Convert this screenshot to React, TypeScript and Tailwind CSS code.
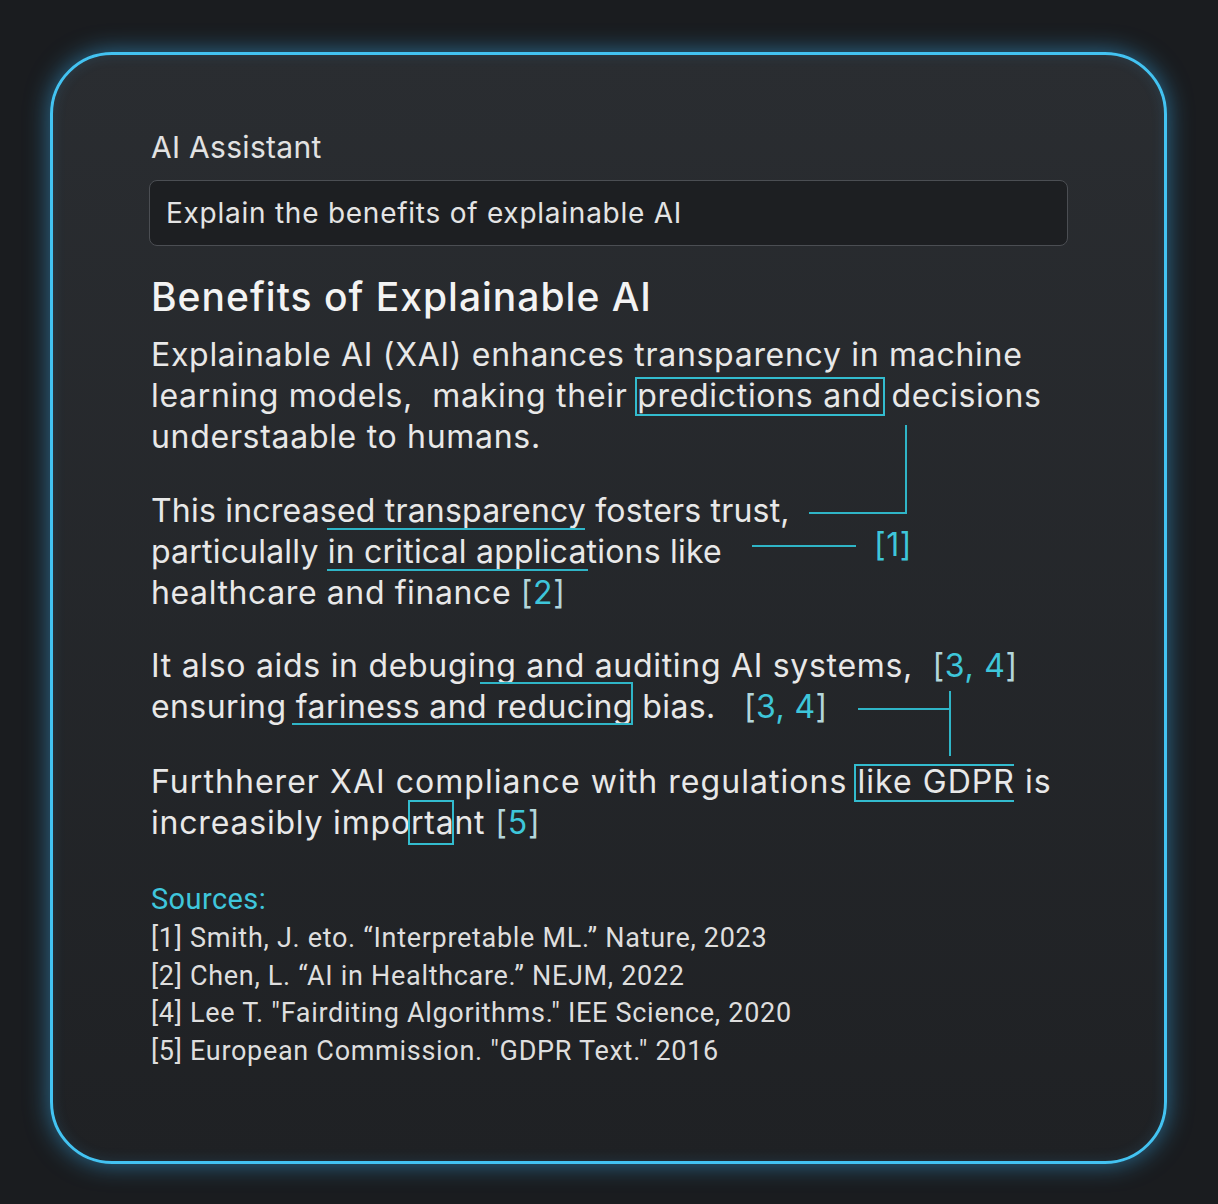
import React from "react";

const Cite = ({ children }: { children: React.ReactNode }) => (
  <span className="text-[#3ec6da]">{children}</span>
);
const Br = ({ c }: { c: string }) => <span className="text-[#b3d6db]">{c}</span>;

export default function App() {
  const line = "block h-[41px] leading-[41px] whitespace-pre";
  const src = "h-[37.5px] leading-[37.5px]";
  return (
    <div
      className="relative w-[1218px] h-[1204px] overflow-hidden bg-[#1a1c1f] pt-[52px] pl-[50px]"
      style={{ fontFamily: "Inter, 'Noto Sans', sans-serif" }}
    >
      <div className="w-[1117px] h-[1112px] rounded-[62px] border-[3px] border-[#43c3f2] bg-gradient-to-b from-[#2a2d31] to-[#1f2124] shadow-[0_0_24px_rgba(56,180,248,0.55),inset_0_0_14px_rgba(56,180,248,0.14)] pl-[98px] pr-[96px] pt-[74px] flex flex-col">
        <div className="text-[30px] leading-[36px] text-[#e2e2e2] tracking-[0.3px]">AI Assistant</div>
        <div className="-ml-[2px] mt-[15px] h-[66px] rounded-[8px] border border-[#4b4e53] bg-[#1d1f22] px-[16px] flex items-center text-[28px] tracking-[0.75px] text-[#e4e4e4]">
          Explain the benefits of explainable AI
        </div>
        <div className="mt-[28px] h-[46px] leading-[46px] text-[39px] font-medium text-[#f3f3f3] tracking-[1px]">
          Benefits of Explainable AI
        </div>
        <div className="mt-[14px] text-[32px] tracking-[0.7px] text-[#e8e8e8] flex flex-col">
          <div>
            <span className={line}>Explainable AI (XAI) enhances transparency in machine</span>
            <span className={line}>learning models,  making their predictions and decisions</span>
            <span className={line}>understaable to humans.</span>
          </div>
          <div className="mt-[33px] tracking-[0.2px]">
            <span className={line}>This increased transparency fosters trust,</span>
            <span className={line}>particulally in critical applications like</span>
            <span className={`${line} tracking-[0.6px]`}>
              healthcare and finance <Br c="[" />
              <Cite>2</Cite>
              <Br c="]" />
            </span>
          </div>
          <div className="mt-[32px]">
            <span className={line}>
              It also aids in debuging and auditing AI systems,  <Br c="[" />
              <Cite>3, 4</Cite>
              <Br c="]" />
            </span>
            <span className={`${line} tracking-[0.4px]`}>
              ensuring fariness and reducing bias.   <Br c="[" />
              <Cite>3, 4</Cite>
              <Br c="]" />
            </span>
          </div>
          <div className="mt-[34px]">
            <span className={`${line} tracking-[1.05px]`}>Furthherer XAI compliance with regulations like GDPR is</span>
            <span className={`${line} tracking-[0.8px]`}>
              increasibly important <Br c="[" />
              <Cite>5</Cite>
              <Br c="]" />
            </span>
          </div>
        </div>
        <div className="mt-[38px]" style={{ fontFamily: "Roboto, 'Liberation Sans', sans-serif" }}>
          <div className="h-[36px] leading-[36px] text-[29px] text-[#3fc6dc] tracking-[0.4px]">Sources:</div>
          <div className="mt-[3px] text-[27px] text-[#dedede] tracking-[0.7px] flex flex-col">
            <div className={src}>[1] Smith, J. eto. “Interpretable ML.” Nature, 2023</div>
            <div className={src}>[2] Chen, L. “AI in Healthcare.” NEJM, 2022</div>
            <div className={src}>[4] Lee T. "Fairditing Algorithms." IEE Science, 2020</div>
            <div className={src}>[5] European Commission. "GDPR Text." 2016</div>
          </div>
        </div>
      </div>

      {/* annotation overlays */}
      <div className="absolute left-[635px] top-[377px] w-[250px] h-[39px] border-2 border-[#33bccf]" />
      <div className="absolute left-[905px] top-[425px] w-[2px] h-[89px] bg-[#2fb5c7]" />
      <div className="absolute left-[809px] top-[512px] w-[98px] h-[2px] bg-[#2fb5c7]" />
      <div className="absolute left-[752px] top-[545px] w-[104px] h-[2px] bg-[#2fb5c7]" />
      <div className="absolute left-[874px] top-[523px] h-[44px] leading-[44px] text-[32px] tracking-[0.5px] text-[#3ec6da]">[1]</div>
      <div className="absolute left-[327px] top-[528px] w-[258px] h-[2px] bg-[#2fb5c7]" />
      <div className="absolute left-[327px] top-[569px] w-[261px] h-[2px] bg-[#2fb5c7]" />
      <div className="absolute left-[480px] top-[682px] w-[153px] h-[2px] bg-[#2fb5c7]" />
      <div className="absolute left-[631px] top-[682px] w-[2px] h-[43px] bg-[#2fb5c7]" />
      <div className="absolute left-[292px] top-[723px] w-[341px] h-[2px] bg-[#2fb5c7]" />
      <div className="absolute left-[858px] top-[708px] w-[92px] h-[2px] bg-[#2fb5c7]" />
      <div className="absolute left-[949px] top-[691px] w-[2px] h-[65px] bg-[#2fb5c7]" />
      <div className="absolute left-[854px] top-[764px] w-[160px] h-[38px] border-2 border-r-0 border-[#33bccf]" />
      <div className="absolute left-[408px] top-[800px] w-[46px] h-[45px] border-2 border-[#33bccf]" />
    </div>
  );
}
